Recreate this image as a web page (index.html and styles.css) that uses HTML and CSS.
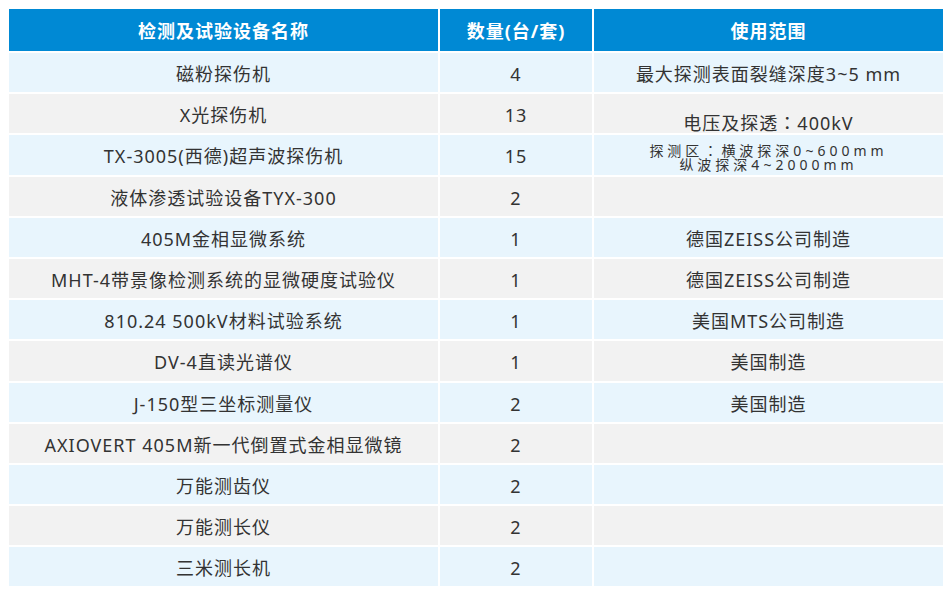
FILE: index.html
```html
<!DOCTYPE html>
<html lang="zh-CN">
<head>
<meta charset="utf-8">
<title>检测及试验设备</title>
<link rel="stylesheet" href="styles.css">
</head>
<body>
<div class="wrap">
<table class="equip">
  <colgroup>
    <col class="c1"><col class="c2"><col class="c3">
  </colgroup>
  <thead>
    <tr><th>检测及试验设备名称</th><th>数量(台/套)</th><th>使用范围</th></tr>
  </thead>
  <tbody>
    <tr class="blue"><td>磁粉探伤机</td><td>4</td><td>最大探测表面裂缝深度3~5 mm</td></tr>
    <tr class="gray"><td>X光探伤机</td><td>13</td><td class="low">电压及探透<span class="colon" lang="zh-TW">：</span>400kV</td></tr>
    <tr class="blue"><td>TX-3005(西德)超声波探伤机</td><td>15</td><td class="small">探测区<span class="colon" lang="zh-TW">：</span>横波探深0~600mm<br>纵波探深4~2000mm</td></tr>
    <tr class="gray"><td>液体渗透试验设备TYX-300</td><td>2</td><td></td></tr>
    <tr class="blue"><td>405M金相显微系统</td><td>1</td><td>德国ZEISS公司制造</td></tr>
    <tr class="gray"><td>MHT-4带景像检测系统的显微硬度试验仪</td><td>1</td><td>德国ZEISS公司制造</td></tr>
    <tr class="blue"><td>810.24 500kV材料试验系统</td><td>1</td><td>美国MTS公司制造</td></tr>
    <tr class="gray"><td>DV-4直读光谱仪</td><td>1</td><td>美国制造</td></tr>
    <tr class="blue"><td>J-150型三坐标测量仪</td><td>2</td><td>美国制造</td></tr>
    <tr class="gray"><td>AXIOVERT 405M新一代倒置式金相显微镜</td><td>2</td><td></td></tr>
    <tr class="blue"><td>万能测齿仪</td><td>2</td><td></td></tr>
    <tr class="gray"><td>万能测长仪</td><td>2</td><td></td></tr>
    <tr class="blue"><td>三米测长机</td><td>2</td><td></td></tr>
  </tbody>
</table>
</div>
</body>
</html>
```

FILE: styles.css
```css
html, body {
  margin: 0;
  padding: 0;
  background: #ffffff;
}
.wrap {
  padding: 7px 7px;
}
.equip {
  border-collapse: separate;
  border-spacing: 2px;
  table-layout: fixed;
  width: 938px;
  font-family: "Noto Sans", "Noto Sans CJK SC", sans-serif;
  font-size: 18px;
  letter-spacing: 1px;
  color: #333333;
}
.c1 { width: 429px; }
.c2 { width: 152px; }
.c3 { width: 349px; }
.equip th {
  height: 42px;
  padding: 0;
  background: #0089d4;
  color: #ffffff;
  font-weight: bold;
  font-size: 18px;
  text-align: center;
  vertical-align: middle;
}
.equip td {
  box-sizing: border-box;
  height: 39.2px;
  padding: 3px 0 0 0;
  text-align: center;
  vertical-align: middle;
  line-height: 20px;
  white-space: nowrap;
}
.blue td { background: #e8f5fd; }
.gray td { background: #f2f2f2; }
.equip td.low {
  vertical-align: bottom;
  padding: 0;
}
.equip td.small {
  font-size: 14px;
  line-height: 14px;
  letter-spacing: 4px;
  padding-top: 5px;
}
.colon {
  font-family: "Noto Sans CJK TC", sans-serif;
}
```
